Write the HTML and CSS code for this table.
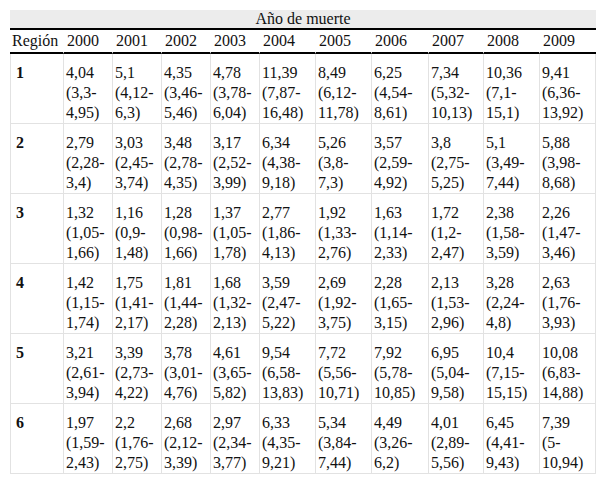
FILE: index.html
```html
<!DOCTYPE html>
<html lang="es">
<head>
<meta charset="utf-8">
<title>Año de muerte</title>
<link rel="stylesheet" href="styles.css">
</head>
<body>
<div class="wrap">
<table class="data">
<colgroup>
<col class="c-reg">
<col class="c-a"><col class="c-a"><col class="c-a"><col class="c-a">
<col class="c-b"><col class="c-b"><col class="c-c"><col class="c-d"><col class="c-b"><col class="c-c">
</colgroup>
<thead>
<tr class="h1"><th colspan="11">Año de muerte</th></tr>
<tr class="h2"><th>Región</th><th>2000</th><th>2001</th><th>2002</th><th>2003</th><th>2004</th><th>2005</th><th>2006</th><th>2007</th><th>2008</th><th>2009</th></tr>
</thead>
<tbody>
<tr><td class="reg">1</td><td>4,04<br>(3,3-<br>4,95)</td><td>5,1<br>(4,12-<br>6,3)</td><td>4,35<br>(3,46-<br>5,46)</td><td>4,78<br>(3,78-<br>6,04)</td><td>11,39<br>(7,87-<br>16,48)</td><td>8,49<br>(6,12-<br>11,78)</td><td>6,25<br>(4,54-<br>8,61)</td><td>7,34<br>(5,32-<br>10,13)</td><td>10,36<br>(7,1-<br>15,1)</td><td>9,41<br>(6,36-<br>13,92)</td></tr>
<tr><td class="reg">2</td><td>2,79<br>(2,28-<br>3,4)</td><td>3,03<br>(2,45-<br>3,74)</td><td>3,48<br>(2,78-<br>4,35)</td><td>3,17<br>(2,52-<br>3,99)</td><td>6,34<br>(4,38-<br>9,18)</td><td>5,26<br>(3,8-<br>7,3)</td><td>3,57<br>(2,59-<br>4,92)</td><td>3,8<br>(2,75-<br>5,25)</td><td>5,1<br>(3,49-<br>7,44)</td><td>5,88<br>(3,98-<br>8,68)</td></tr>
<tr><td class="reg">3</td><td>1,32<br>(1,05-<br>1,66)</td><td>1,16<br>(0,9-<br>1,48)</td><td>1,28<br>(0,98-<br>1,66)</td><td>1,37<br>(1,05-<br>1,78)</td><td>2,77<br>(1,86-<br>4,13)</td><td>1,92<br>(1,33-<br>2,76)</td><td>1,63<br>(1,14-<br>2,33)</td><td>1,72<br>(1,2-<br>2,47)</td><td>2,38<br>(1,58-<br>3,59)</td><td>2,26<br>(1,47-<br>3,46)</td></tr>
<tr><td class="reg">4</td><td>1,42<br>(1,15-<br>1,74)</td><td>1,75<br>(1,41-<br>2,17)</td><td>1,81<br>(1,44-<br>2,28)</td><td>1,68<br>(1,32-<br>2,13)</td><td>3,59<br>(2,47-<br>5,22)</td><td>2,69<br>(1,92-<br>3,75)</td><td>2,28<br>(1,65-<br>3,15)</td><td>2,13<br>(1,53-<br>2,96)</td><td>3,28<br>(2,24-<br>4,8)</td><td>2,63<br>(1,76-<br>3,93)</td></tr>
<tr><td class="reg">5</td><td>3,21<br>(2,61-<br>3,94)</td><td>3,39<br>(2,73-<br>4,22)</td><td>3,78<br>(3,01-<br>4,76)</td><td>4,61<br>(3,65-<br>5,82)</td><td>9,54<br>(6,58-<br>13,83)</td><td>7,72<br>(5,56-<br>10,71)</td><td>7,92<br>(5,78-<br>10,85)</td><td>6,95<br>(5,04-<br>9,58)</td><td>10,4<br>(7,15-<br>15,15)</td><td>10,08<br>(6,83-<br>14,88)</td></tr>
<tr><td class="reg">6</td><td>1,97<br>(1,59-<br>2,43)</td><td>2,2<br>(1,76-<br>2,75)</td><td>2,68<br>(2,12-<br>3,39)</td><td>2,97<br>(2,34-<br>3,77)</td><td>6,33<br>(4,35-<br>9,21)</td><td>5,34<br>(3,84-<br>7,44)</td><td>4,49<br>(3,26-<br>6,2)</td><td>4,01<br>(2,89-<br>5,56)</td><td>6,45<br>(4,41-<br>9,43)</td><td>7,39<br>(5-<br>10,94)</td></tr>
</tbody>
</table>
</div>
</body>
</html>
```
FILE: styles.css
```css
html, body {
  margin: 0;
  padding: 0;
  background: #fff;
}
.wrap {
  padding: 10px;
}
.data {
  width: 586px;
  table-layout: fixed;
  border-collapse: separate;
  border-spacing: 0;
  font-family: "Liberation Serif", serif;
  font-size: 16px;
  color: #111;
}
.c-reg { width: 53px; }
.c-a { width: 49px; }
.c-b { width: 56px; }
.c-c { width: 57px; }
.c-d { width: 55px; }
.data th,
.data td {
  font-family: "Liberation Serif", serif;
  font-size: 16px;
}
.data th {
  font-weight: normal;
  line-height: 18px;
}
.h1 th {
  background: #ececec;
  text-align: center;
  padding: 0;
  border-bottom: 2px solid #000;
}
.h2 th {
  text-align: left;
  padding: 2px 2px 2px 3px;
  border-bottom: 2px solid #000;
  border-left: 1px solid #fff;
}
.h2 th:first-child {
  border-left: 0;
  padding-left: 2px;
}
.data td {
  vertical-align: top;
  line-height: 20px;
  padding: 9px 2px 0 2px;
  border-left: 1px solid #e2e2e2;
  border-bottom: 1px solid #e2e2e2;
  white-space: nowrap;
}
.data td:last-child {
  border-right: 1px solid #e2e2e2;
}
.data td.reg {
  font-weight: bold;
  padding-left: 5px;
}
```
